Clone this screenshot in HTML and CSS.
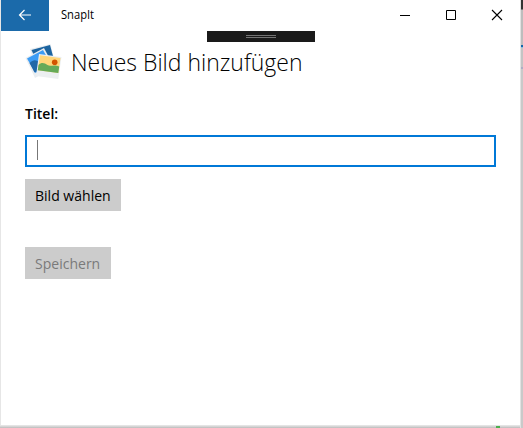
FILE: index.html
```
<!DOCTYPE html>
<html lang="de">
<head>
<meta charset="utf-8">
<title>SnapIt</title>
<link rel="stylesheet" href="styles.css">
</head>
<body>
<div class="window">
  <header class="titlebar">
    <button class="back" aria-label="Zurück">
      <svg width="14" height="12" viewBox="0 0 14 12" fill="none" stroke="#fff" stroke-width="1.2"><path d="M13 6H1.5M6.5 1l-5 5 5 5"/></svg>
    </button>
    <span class="app-name">SnapIt</span>
    <div class="controls">
      <svg width="46" height="31" viewBox="0 0 46 31"><path d="M18 15.5h10" stroke="#000"/></svg>
      <svg width="46" height="31" viewBox="0 0 46 31"><path d="M18.5 10.5h9v9h-9z" fill="none" stroke="#000"/></svg>
      <svg width="46" height="31" viewBox="0 0 46 31"><path d="M18 10l10 10M28 10L18 20" stroke="#000" stroke-width="1.1"/></svg>
    </div>
  </header>
  <div class="grip"><i></i><i></i></div>
  <main>
    <div class="heading">
      <svg class="logo" width="38" height="38" viewBox="0 0 38 38">
        <path d="M5 6L25.500 1l4 16-19 6z" fill="#e9edf0"/>
        <path d="M6.500 7L25 2l3.500 13-16 5z" fill="#1c64a0"/>
        <path d="M0.500 15L19 5l10 19-19 11z" fill="#e9edf0"/>
        <path d="M2 15.500L18 7l8 14-15.500 9z" fill="#3b9cf5"/>
        <path d="M4.500 20c4-4 7-3 9-1l-1 9-3 1.500z" fill="#2068a8"/>
        <path d="M14 11l22.500 3-3.200 22-22.300-3z" fill="#eceff1"/>
        <path d="M15 12.300l20.500 2.700-2.200 15-20.500-2.800z" fill="#ffd67a"/>
        <path d="M13.500 22c3-3 6-2 9 0 3 2 6-1 11.700 1.500l-.9 6.500-20.500-2.800z" fill="#65aa58"/>
        <circle cx="29.700" cy="19.200" r="2.800" fill="#d35400"/>
      </svg>
      <h1><span>Neues Bild hinzufügen</span></h1>
    </div>
    <label for="titel"><span>Titel:</span></label>
    <div class="field" id="titel"><i class="caret"></i></div>
    <button class="btn choose"><span>Bild wählen</span></button>
    <button class="btn save" disabled><span>Speichern</span></button>
  </main>
</div>
<div class="behind"></div>
<div class="marker"></div>
</body>
</html>
```
FILE: styles.css
```
* { box-sizing: border-box; }
body {
  margin: 0;
  height: 428px;
  overflow: hidden;
  position: relative;
  background: linear-gradient(#e6e6e6 425px, #e2e2e2 426px, #c9c9c9 427px, #bebebe 428px);
  font-family: "Open Sans", "Noto Sans", sans-serif;
  color: #000;
}
.window {
  width: 519px;
  height: 425px;
  margin-left: 1px;
  background: #fff;
  position: relative;
}
.titlebar { display: flex; height: 31px; align-items: stretch; }
.back {
  width: 48px;
  padding: 0 0 2px;
  border: 0;
  background: #1b6aaa;
  display: flex;
  align-items: center;
  justify-content: center;
}
.app-name {
  margin-left: 12px;
  font-size: 12px;
  line-height: 30px;
  transform: scaleX(.93);
  transform-origin: 0 50%;
}
.controls { display: flex; margin-left: auto; }
.grip {
  position: absolute;
  left: 206px;
  top: 31px;
  width: 108px;
  height: 11px;
  padding-top: 4px;
  background: #1a1a1a;
}
.grip i {
  display: block;
  width: 30px;
  height: 1px;
  margin: 0 auto 1px;
  background: #747474;
}
main { padding: 12px 24px 0; }
.heading { display: flex; height: 38px; }
.logo { flex: none; }
h1 {
  margin: 0 0 0 8px;
  font-size: 24px;
  line-height: 38px;
  font-weight: 300;
  white-space: nowrap;
}
h1 span {
  display: inline-block;
  transform: scaleX(.957);
  transform-origin: 0 50%;
}
label {
  display: block;
  height: 54px;
  padding-top: 23px;
  font-size: 14px;
  line-height: 20px;
  font-weight: 600;
}
.field {
  height: 32px;
  border: 2px solid #0078d7;
  padding: 3px 10px;
}
.caret { display: block; width: 1px; height: 20px; background: #777; }
.btn {
  display: block;
  height: 32px;
  border: 0;
  padding: 0 0 0 10px;
  background: #ccc;
  color: #000;
  font: 15px/32px "Open Sans", "Noto Sans", sans-serif;
  text-align: left;
  white-space: nowrap;
}
.btn span {
  display: inline-block;
  transform: scaleX(.935);
  transform-origin: 0 50%;
}
.choose { width: 96px; margin-top: 12px; }
.save { width: 86px; margin-top: 36px; color: #7a7a7a; }
.behind {
  position: absolute;
  left: 520px;
  top: 0;
  width: 3px;
  height: 428px;
  background:
    linear-gradient(#333 0 9px, #777 9px 10px, #bdbdbd 10px 45px, #1467ab 45px 47px, #8ebddd 47px 48px, #c4c4c4 48px 67px, #adadc4 67px 69px, #c9c9c9 69px) 1px 0 / 2px 100% no-repeat,
    #e2e2e2;
}
.marker {
  position: absolute;
  left: 496px;
  top: 426px;
  width: 4px;
  height: 2px;
  background: #4caf50;
}
```
